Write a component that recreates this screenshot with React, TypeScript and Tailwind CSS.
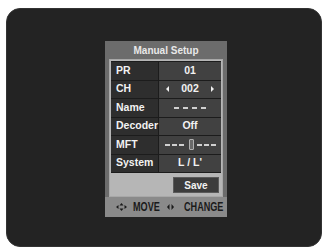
import React from 'react';

const rows = ['PR', 'CH', 'Name', 'Decoder', 'MFT', 'System'];

const Dash = () => <div className="w-[5px] h-[2px] bg-[#d0d0d0]" />;

const ValueCell = ({ label }: { label: string }) => {
  if (label === 'CH') {
    return (
      <div className="flex items-center justify-between w-full px-[7px]">
        <svg width="3" height="6" viewBox="0 0 3 6">
          <path d="M3 0 L0 3 L3 6 Z" fill="#f0f0f0" />
        </svg>
        <span>002</span>
        <svg width="3" height="6" viewBox="0 0 3 6">
          <path d="M0 0 L3 3 L0 6 Z" fill="#f0f0f0" />
        </svg>
      </div>
    );
  }
  if (label === 'Name') {
    return (
      <div className="flex items-center gap-[4px]">
        <Dash />
        <Dash />
        <Dash />
        <Dash />
      </div>
    );
  }
  if (label === 'MFT') {
    return (
      <div className="flex items-center">
        <div className="flex items-center gap-[2px]">
          <Dash />
          <Dash />
          <Dash />
        </div>
        <div className="w-[5px] h-[11px] ml-[5px] mr-[3px] rounded-[1px] border border-[#b0b0b0] bg-[#6a6a6a]" />
        <div className="flex items-center gap-[2px]">
          <Dash />
          <Dash />
          <Dash />
        </div>
      </div>
    );
  }
  const values: Record<string, string> = {
    PR: '01',
    Decoder: 'Off',
    System: "L / L'",
  };
  return <span>{values[label]}</span>;
};

const App = () => {
  return (
    <div className="w-[326px] h-[250px] bg-white pt-[8px] pl-[6px] font-['Liberation_Sans',Arial,sans-serif]">
      <div className="w-[316px] h-[239px] rounded-[14px] bg-[#232323] border border-[#333333] pt-[32px] pl-[98px]">
        <div className="w-[122px] h-[176px] bg-[#6c6c6c] flex flex-col">
          <div className="h-[18px] flex items-center justify-center text-[10px] font-bold text-[#e8e8e8]">
            Manual Setup
          </div>
          <div className="mx-[4px] h-[138px] border border-[#a8a8a8] bg-[#b6b6b6] p-px flex flex-col">
            <div className="flex flex-col gap-px bg-[#1c1c1c] py-px">
              {rows.map((label) => (
                <div key={label} className="flex h-[17.5px] gap-px">
                  <div className="w-[47px] bg-[#2e2e2e] flex items-center pl-[5px] text-[10.5px] font-bold text-[#f2f2f2]">
                    {label}
                  </div>
                  <div className="flex-1 bg-[#414141] flex items-center justify-center text-[10.5px] font-bold text-[#f2f2f2]">
                    <ValueCell label={label} />
                  </div>
                </div>
              ))}
            </div>
            <div className="flex justify-end pt-[4px] pr-[2px]">
              <div className="w-[46px] h-[16px] bg-[#3c3c3c] border border-[#5a5a5a] flex items-center justify-center text-[10px] font-bold text-[#f2f2f2]">
                Save
              </div>
            </div>
          </div>
          <div className="flex-1 bg-[#8a8a8a] flex items-center pl-[11px] text-[13px] font-bold text-[#1a1a1a] whitespace-nowrap">
            <svg width="11" height="8" viewBox="0 0 11 8">
              <path d="M2.5 2 L0 4 L2.5 6 Z" fill="#1a1a1a" />
              <path d="M5.5 0 L3.5 2.5 L7.5 2.5 Z" fill="#1a1a1a" />
              <path d="M5.5 8 L3.5 5.5 L7.5 5.5 Z" fill="#1a1a1a" />
              <path d="M8.5 2 L11 4 L8.5 6 Z" fill="#1a1a1a" />
            </svg>
            <span className="inline-block w-[27px] ml-[6px]">
              <span className="inline-block origin-left scale-x-[0.7]">MOVE</span>
            </span>
            <svg width="7" height="6" viewBox="0 0 7 6" className="ml-[7px]">
              <path d="M2.5 0 L0 3 L2.5 6 Z" fill="#1a1a1a" />
              <path d="M4.5 0 L7 3 L4.5 6 Z" fill="#1a1a1a" />
            </svg>
            <span className="inline-block w-[40px] ml-[10px]">
              <span className="inline-block origin-left scale-x-[0.7]">CHANGE</span>
            </span>
          </div>
        </div>
      </div>
    </div>
  );
};

export default App;
